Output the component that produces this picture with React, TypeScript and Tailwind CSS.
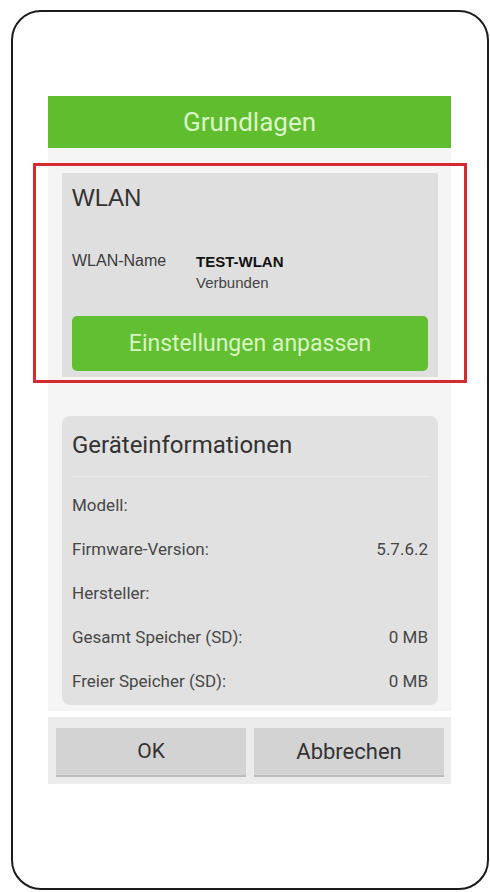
import React from "react";

const rows: { label: string; value: string }[] = [
  { label: "Modell:", value: "" },
  { label: "Firmware-Version:", value: "5.7.6.2" },
  { label: "Hersteller:", value: "" },
  { label: "Gesamt Speicher (SD):", value: "0 MB" },
  { label: "Freier Speicher (SD):", value: "0 MB" },
];

export default function App() {
  return (
    <div className="w-[490px] h-[892px] bg-white pt-[10px] pl-[11px] font-['Roboto',sans-serif]">
      {/* phone outline */}
      <div className="w-[478px] h-[880px] border-2 border-[#1c1c1c] rounded-[30px] pt-[84px] pl-[35px]">
        <div className="relative w-[403px]">
          {/* dialog title */}
          <div className="h-[52px] bg-[#5fbd2e] flex items-center justify-center">
            <span className="text-[26px] text-[#dcf5c6] leading-none">Grundlagen</span>
          </div>

          {/* dialog body */}
          <div className="bg-[#f5f5f5] pt-[25px] pb-[6px] pl-[14px] pr-[13px] flex flex-col gap-[39px]">
            {/* WLAN card */}
            <div className="bg-[#dfdfdf] px-[10px] pt-[11px] pb-[6px]">
              <div className="h-[28px] leading-[28px] text-[24px] text-[#333] font-['Liberation_Sans',sans-serif]">
                WLAN
              </div>
              <div className="mt-[40px] flex font-['Liberation_Sans',sans-serif]">
                <div className="w-[124px] text-[16px] leading-[20px] text-[#3a3a3a] -mt-[1px]">WLAN-Name</div>
                <div className="flex flex-col">
                  <span className="text-[15px] leading-[20px] font-bold text-[#111]">TEST-WLAN</span>
                  <span className="text-[15px] leading-[22px] text-[#444]">Verbunden</span>
                </div>
              </div>
              <div className="mt-[22px] h-[55px] rounded-[5px] bg-[#62bf32] flex items-center justify-center">
                <span className="text-[23px] text-[#d9f4c2] leading-none">Einstellungen anpassen</span>
              </div>
            </div>

            {/* device info card */}
            <div className="bg-[#e1e1e1] rounded-[8px] px-[10px] pb-[1px]">
              <div className="pt-[14px] pb-[16px] text-[24px] leading-[30px] text-[#333]">
                Geräteinformationen
              </div>
              <div className="h-px bg-[#ebebeb]" />
              <div className="mt-[7px] flex flex-col">
                {rows.map((r) => (
                  <div
                    key={r.label}
                    className="h-[44px] flex items-center justify-between text-[17px] text-[#474747]"
                  >
                    <span>{r.label}</span>
                    <span>{r.value}</span>
                  </div>
                ))}
              </div>
            </div>
          </div>

          {/* action buttons */}
          <div className="mt-[6px] bg-[#ececec] pt-[11px] pb-[7px] pl-[8px] pr-[7px] flex gap-[8px]">
            <div className="w-[190px] h-[49px] bg-[#d3d3d3] border-b-2 border-[#bcbcbc] flex items-center justify-center text-[21px] text-[#333]">
              OK
            </div>
            <div className="w-[190px] h-[49px] bg-[#d3d3d3] border-b-2 border-[#bcbcbc] flex items-center justify-center text-[22px] text-[#333]">
              Abbrechen
            </div>
          </div>

          {/* highlight frame around the WLAN section */}
          <div className="absolute left-[-15px] top-[67px] w-[434px] h-[220px] border-[3px] border-[#d52a34] pointer-events-none" />
        </div>
      </div>
    </div>
  );
}
